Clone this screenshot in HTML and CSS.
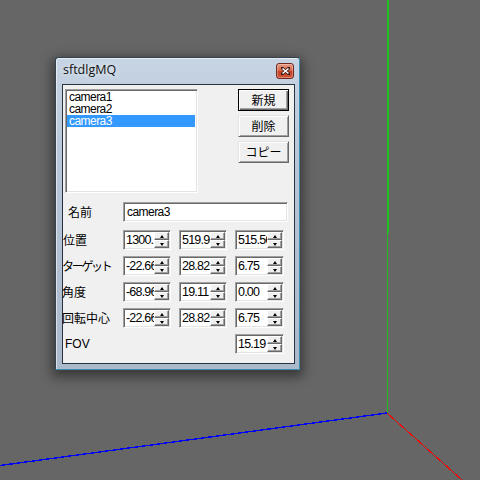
FILE: index.html
```html
<!DOCTYPE html>
<html>
<head>
<meta charset="utf-8">
<link rel="stylesheet" href="styles.css">
</head>
<body>
<div class="desk">
  <svg class="axes" width="480" height="480" viewBox="0 0 480 480">
    <line x1="388" y1="0" x2="388" y2="233" stroke="#1fbf1f" stroke-width="2"/>
    <line x1="387.5" y1="233" x2="387.5" y2="413" stroke="#1fbf1f" stroke-width="1"/>
    <line x1="387" y1="413" x2="0" y2="465.5" stroke="#0000ff" stroke-width="1.4"/>
    <line x1="387" y1="413" x2="462" y2="480" stroke="#ff0000" stroke-width="1"/>
  </svg>

  <div class="win">
    <div class="titlebar">
      <span class="title">sftdlgMQ</span>
      <div class="close">
        <svg width="9" height="8" viewBox="0 0 9 8">
          <path d="M1 1 L8 7 M8 1 L1 7" stroke="#3a1a14" stroke-width="3" stroke-linecap="square"/>
          <path d="M1.5 1.5 L7.5 6.5 M7.5 1.5 L1.5 6.5" stroke="#ffffff" stroke-width="1.6"/>
        </svg>
      </div>
    </div>
    <div class="client">
      <div class="top">
        <div class="listbox">
          <div class="item">camera1</div>
          <div class="item">camera2</div>
          <div class="item sel">camera3</div>
        </div>
        <div class="btns">
          <div class="btn default"><span>新規</span></div>
          <div class="btn"><span>削除</span></div>
          <div class="btn"><span>コピー</span></div>
        </div>
      </div>

      <div class="form">
        <div class="lbl l-name">名前</div>
        <div class="edit name">camera3</div>

        <div class="lbl">位置</div>
        <div class="spin"><div class="val">1300.13</div><div class="ud"><div class="up"></div><div class="dn"></div></div></div>
        <div class="spin"><div class="val">519.98</div><div class="ud"><div class="up"></div><div class="dn"></div></div></div>
        <div class="spin"><div class="val">515.56</div><div class="ud"><div class="up"></div><div class="dn"></div></div></div>

        <div class="lbl l-tgt">ターゲット</div>
        <div class="spin"><div class="val">-22.66</div><div class="ud"><div class="up"></div><div class="dn"></div></div></div>
        <div class="spin"><div class="val">28.82</div><div class="ud"><div class="up"></div><div class="dn"></div></div></div>
        <div class="spin"><div class="val">6.75</div><div class="ud"><div class="up"></div><div class="dn"></div></div></div>

        <div class="lbl l-left">角度</div>
        <div class="spin"><div class="val">-68.96</div><div class="ud"><div class="up"></div><div class="dn"></div></div></div>
        <div class="spin"><div class="val">19.11</div><div class="ud"><div class="up"></div><div class="dn"></div></div></div>
        <div class="spin"><div class="val">0.00</div><div class="ud"><div class="up"></div><div class="dn"></div></div></div>

        <div class="lbl l-left">回転中心</div>
        <div class="spin"><div class="val">-22.66</div><div class="ud"><div class="up"></div><div class="dn"></div></div></div>
        <div class="spin"><div class="val">28.82</div><div class="ud"><div class="up"></div><div class="dn"></div></div></div>
        <div class="spin"><div class="val">6.75</div><div class="ud"><div class="up"></div><div class="dn"></div></div></div>

        <div class="lbl l-fov">FOV</div>
        <div class="spin c4"><div class="val">15.19</div><div class="ud"><div class="up"></div><div class="dn"></div></div></div>
      </div>
    </div>
  </div>
</div>
</body>
</html>
```

FILE: styles.css
```css
html, body {
  margin: 0;
  padding: 0;
}
body {
  background: #666666;
  font-family: "Liberation Sans", "Noto Sans CJK JP", sans-serif;
}
.desk {
  position: relative;
  width: 480px;
  height: 480px;
  overflow: hidden;
}
.axes {
  position: absolute;
  left: 0;
  top: 0;
  shape-rendering: crispEdges;
}
.win {
  position: absolute;
  left: 55px;
  top: 57px;
  width: 245px;
  height: 313px;
  box-sizing: border-box;
  border: 1px solid #34414f;
  border-bottom-color: #3a8fae;
  border-right-color: #3a8fae;
  border-radius: 3px 3px 0 0;
  background: linear-gradient(180deg, #c6d4e3 0%, #b9c8d8 30%, #abbacb 100%);
  box-shadow: inset 1px 1px 0 rgba(255,255,255,0.55), 0 4px 12px 3px rgba(0,0,0,0.45);
  padding: 0 4px 5px 6px;
  display: flex;
  flex-direction: column;
}
.titlebar {
  height: 26px;
  flex: none;
  display: flex;
  align-items: flex-start;
  justify-content: space-between;
}
.title {
  font-family: "Open Sans", "Liberation Sans", sans-serif;
  font-size: 12.5px;
  line-height: 16px;
  color: #111;
  padding-top: 4px;
  padding-left: 1px;
  text-shadow: 0 0 6px rgba(255,255,255,0.9);
}
.close {
  margin-top: 5px;
  margin-right: 1px;
  width: 18px;
  height: 16px;
  box-sizing: border-box;
  border: 1px solid #6d2a1f;
  border-radius: 3px;
  background: linear-gradient(180deg, #e99a82 0%, #d86a4e 45%, #c43e22 55%, #d4583a 100%);
  box-shadow: inset 0 0 0 1px rgba(255,255,255,0.3);
  display: flex;
  align-items: center;
  justify-content: center;
}
.client {
  flex: 1;
  border: 1px solid #26323f;
  background: #f0f0f0;
  font-size: 12px;
  color: #000;
}
.top {
  display: flex;
  justify-content: space-between;
  padding: 4px 5px 0 2px;
}
.listbox {
  width: 133px;
  height: 104px;
  box-sizing: border-box;
  background: #fff;
  border-top: 1px solid #a0a0a0;
  border-left: 1px solid #a0a0a0;
  border-right: 1px solid #ffffff;
  border-bottom: 1px solid #ffffff;
  box-shadow: inset 1px 1px 0 #696969, inset -1px -1px 0 #e3e3e3;
  padding: 1px 2px 1px 1px;
}
.item {
  height: 12px;
  line-height: 12px;
  padding-left: 2px;
  font-size: 12px;
  letter-spacing: -0.55px;
  white-space: nowrap;
}
.item.sel {
  background: #3399ff;
  color: #fff;
}
.btns {
  width: 51px;
  display: flex;
  flex-direction: column;
  gap: 4px;
}
.btn {
  height: 22px;
  box-sizing: border-box;
  background: #f0f0f0;
  border-top: 1px solid #e3e3e3;
  border-left: 1px solid #e3e3e3;
  border-right: 1px solid #696969;
  border-bottom: 1px solid #696969;
  box-shadow: inset 1px 1px 0 #ffffff, inset -1px -1px 0 #a0a0a0;
  display: flex;
  align-items: center;
  justify-content: center;
  font-family: "Noto Sans CJK JP", sans-serif;
  font-size: 12px;
  line-height: 14px;
}
.btn.default {
  border: 1px solid #000;
  box-shadow: inset 1px 1px 0 #ffffff, inset -1px -1px 0 #696969, inset -2px -2px 0 #a0a0a0;
}
.form {
  margin-top: 9px;
  display: grid;
  grid-template-columns: 52px 48px 48px 49px;
  grid-template-rows: 22px repeat(5, 20px);
  column-gap: 8px;
  row-gap: 6px;
}
.lbl {
  font-family: "Noto Sans CJK JP", sans-serif;
  font-size: 12px;
  line-height: 20px;
  height: 20px;
  white-space: nowrap;
  padding-left: 0;
}
.l-name {
  padding-left: 5px;
}
.l-left {
  margin-left: -1px;
}
.l-tgt {
  letter-spacing: -2.3px;
  margin-left: -1px;
}
.l-fov {
  padding-left: 2px;
  font-family: "Liberation Sans", sans-serif;
}
.edit, .spin {
  height: 20px;
  box-sizing: border-box;
  background: #fff;
  border-top: 1px solid #a0a0a0;
  border-left: 1px solid #a0a0a0;
  border-right: 1px solid #ffffff;
  border-bottom: 1px solid #ffffff;
  box-shadow: inset 1px 1px 0 #696969, inset -1px -1px 0 #e3e3e3;
}
.edit.name {
  grid-column: 2 / -1;
  width: 165px;
  padding: 2px 0 0 3px;
  line-height: 15px;
  letter-spacing: -0.55px;
}
.spin {
  display: flex;
  padding: 1px 1px 1px 1px;
}
.spin.c4 {
  grid-column: 4;
}
.val {
  flex: 1;
  overflow: hidden;
  white-space: nowrap;
  line-height: 17px;
  font-size: 12.5px;
  letter-spacing: -0.8px;
  padding-left: 1px;
}
.ud {
  width: 15px;
  display: flex;
  flex-direction: column;
}
.up, .dn {
  flex: 1;
  box-sizing: border-box;
  background: #f0f0f0;
  border-top: 1px solid #ffffff;
  border-left: 1px solid #ffffff;
  border-right: 1px solid #696969;
  border-bottom: 1px solid #696969;
  box-shadow: inset -1px -1px 0 #a0a0a0;
  display: flex;
  align-items: center;
  justify-content: center;
}
.up::after {
  content: "";
  width: 0;
  height: 0;
  border-left: 2.5px solid transparent;
  border-right: 2.5px solid transparent;
  border-bottom: 3px solid #000;
}
.dn::after {
  content: "";
  width: 0;
  height: 0;
  border-left: 2.5px solid transparent;
  border-right: 2.5px solid transparent;
  border-top: 3px solid #000;
}
```
